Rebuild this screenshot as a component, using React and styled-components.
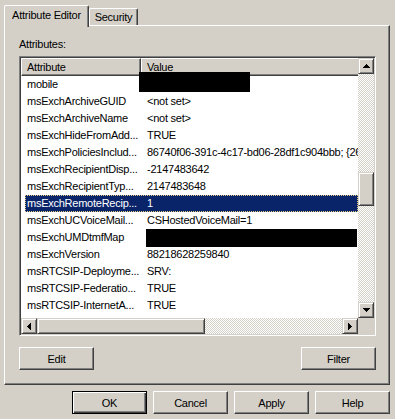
import React from "react";
import styled, { createGlobalStyle } from "styled-components";

const GlobalStyle = createGlobalStyle`
  html, body {
    margin: 0;
    padding: 0;
    background: #d4d0c8;
  }
  body {
    font-family: "Liberation Sans", Arial, sans-serif;
    font-size: 11px;
    letter-spacing: -0.25px;
    color: #000;
  }
`;

const rows = [
  ["mobile", ""],
  ["msExchArchiveGUID", "<not set>"],
  ["msExchArchiveName", "<not set>"],
  ["msExchHideFromAdd...", "TRUE"],
  ["msExchPoliciesInclud...", "86740f06-391c-4c17-bd06-28df1c904bbb; {26491cfc-9e50-4857-861b-0cb8df22b5d7}"],
  ["msExchRecipientDisp...", "-2147483642"],
  ["msExchRecipientTyp...", "2147483648"],
  ["msExchRemoteRecip...", "1"],
  ["msExchUCVoiceMail...", "CSHostedVoiceMail=1"],
  ["msExchUMDtmfMap", ""],
  ["msExchVersion", "88218628259840"],
  ["msRTCSIP-Deployme...", "SRV:"],
  ["msRTCSIP-Federatio...", "TRUE"],
  ["msRTCSIP-InternetA...", "TRUE"],
  ["msRTCSIP-OptionFla...", "257"],
];

const Arrow = ({ dir }) => {
  const up = [
    [3, 0, 1, 1],
    [2, 1, 3, 1],
    [1, 2, 5, 1],
    [0, 3, 7, 1],
  ];
  const vertical = dir === "up" || dir === "down";
  const rects = up.map(([x, y, w, h]) => {
    if (dir === "up") return [x, y, w, h];
    if (dir === "down") return [x, 3 - y, w, h];
    if (dir === "left") return [y, x, h, w];
    return [3 - y, x, h, w];
  });
  return (
    <svg
      width={vertical ? 7 : 4}
      height={vertical ? 4 : 7}
      shapeRendering="crispEdges"
    >
      {rects.map(([x, y, w, h], i) => (
        <rect key={i} x={x} y={y} width={w} height={h} fill="#000" />
      ))}
    </svg>
  );
};

const App = () => {
  return (
    <>
      <GlobalStyle />
      <Dialog>
        <TabStrip>
          <Tab $active $w={85}>Attribute Editor</Tab>
          <Tab $w={49}>Security</Tab>
        </TabStrip>
        <Panel>
          <Label>Attributes:</Label>
          <ListBox>
            <Content>
              <Header>
                <HeaderCell $w={120}>Attribute</HeaderCell>
                <HeaderCell $w={400}>Value</HeaderCell>
              </Header>
              <Rows>
                {rows.map(([name, value], i) => (
                  <Row key={name} $selected={i === 7}>
                    <AttrCell>{name}</AttrCell>
                    <ValueCell>{value}</ValueCell>
                  </Row>
                ))}
              </Rows>
            </Content>
            <VScroll>
              <ScrollBtn>
                <Arrow dir="up" />
              </ScrollBtn>
              <Track $size={98} />
              <Thumb $size={34} />
              <Track $fill />
              <ScrollBtn>
                <Arrow dir="down" />
              </ScrollBtn>
            </VScroll>
            <HScroll>
              <ScrollBtn>
                <Arrow dir="left" />
              </ScrollBtn>
              <Thumb $size={168} />
              <Track $fill />
              <ScrollBtn>
                <Arrow dir="right" />
              </ScrollBtn>
            </HScroll>
            <Corner />
            <Redaction $x={119} $y={15} $w={111} $h={20} />
            <Redaction $x={126} $y={172} $w={211} $h={18} />
          </ListBox>
          <ButtonRow>
            <PushButton>Edit</PushButton>
            <PushButton>Filter</PushButton>
          </ButtonRow>
        </Panel>
        <Footer>
          <PushButton $default>OK</PushButton>
          <PushButton>Cancel</PushButton>
          <PushButton>Apply</PushButton>
          <PushButton>Help</PushButton>
        </Footer>
      </Dialog>
    </>
  );
};

const Dialog = styled.div`
  width: 395px;
  height: 419px;
  box-sizing: border-box;
  padding: 5px 5px 0 4px;
  display: flex;
  flex-direction: column;
`;

const TabStrip = styled.div`
  display: flex;
  align-items: flex-end;
  height: 22px;
  margin-bottom: -2px;
  position: relative;
  z-index: 1;
`;

const Tab = styled.div`
  box-sizing: border-box;
  width: ${(p) => p.$w}px;
  height: ${(p) => (p.$active ? 22 : 17)}px;
  margin-bottom: ${(p) => (p.$active ? 0 : 2)}px;
  padding-top: ${(p) => (p.$active ? 3 : 2)}px;
  text-align: center;
  line-height: 13px;
  background: #d4d0c8;
  border-top: 1px solid #fff;
  border-left: 1px solid #fff;
  border-right: 1px solid #404040;
  box-shadow: inset -1px 0 #808080;
  border-radius: 2px 2px 0 0;
  white-space: nowrap;
`;

const Panel = styled.div`
  box-sizing: border-box;
  width: 386px;
  height: 360px;
  padding: 12px 13px 0 14px;
  border: 1px solid;
  border-color: #fff #404040 #404040 #fff;
  box-shadow: inset -1px -1px #808080;
  display: flex;
  flex-direction: column;
`;

const Label = styled.div`
  line-height: 13px;
  margin-bottom: 5px;
`;

const ListBox = styled.div`
  position: relative;
  box-sizing: border-box;
  width: 357px;
  height: 280px;
  padding: 1px;
  border: 1px solid;
  border-color: #808080 #fff #fff #808080;
  box-shadow: inset 1px 1px #404040, inset -1px -1px #d4d0c8;
  display: grid;
  grid-template-columns: 1fr 16px;
  grid-template-rows: 1fr 16px;
  background: #fff;
`;

const Content = styled.div`
  min-width: 0;
  overflow: hidden;
  display: flex;
  flex-direction: column;
`;

const Header = styled.div`
  display: flex;
  flex-shrink: 0;
`;

const HeaderCell = styled.div`
  box-sizing: border-box;
  flex-shrink: 0;
  width: ${(p) => p.$w}px;
  height: 18px;
  line-height: 16px;
  padding-left: 5px;
  background: #d4d0c8;
  border: 1px solid;
  border-color: #fff #404040 #404040 #fff;
  box-shadow: inset -1px -1px #808080;
  white-space: nowrap;
`;

const Rows = styled.div`
  overflow: hidden;
`;

const Row = styled.div`
  display: flex;
  height: 17px;
  line-height: 16px;
  margin-left: 4px;
  white-space: nowrap;
  background: ${(p) => (p.$selected ? "#0a246a" : "transparent")};
  color: ${(p) => (p.$selected ? "#fff" : "#000")};
  outline: ${(p) => (p.$selected ? "1px dotted #e8d080" : "none")};
  outline-offset: -1px;
`;

const AttrCell = styled.div`
  flex-shrink: 0;
  width: 116px;
  box-sizing: border-box;
  padding-left: 2px;
  overflow: hidden;
`;

const ValueCell = styled.div`
  padding-left: 6px;
`;

const checker = `
  background-color: #fff;
  background-image: repeating-conic-gradient(#d4d0c8 0 25%, #fff 0 50%);
  background-size: 2px 2px;
`;

const VScroll = styled.div`
  display: flex;
  flex-direction: column;
  ${checker}
`;

const HScroll = styled.div`
  display: flex;
  ${checker}
`;

const Raised = `
  box-sizing: border-box;
  background: #d4d0c8;
  border: 1px solid;
  border-color: #d4d0c8 #404040 #404040 #d4d0c8;
  box-shadow: inset 1px 1px #fff, inset -1px -1px #808080;
`;

const ScrollBtn = styled.div`
  ${Raised}
  flex-shrink: 0;
  width: 16px;
  height: 16px;
  display: flex;
  align-items: center;
  justify-content: center;
`;

const Thumb = styled.div`
  ${Raised}
  flex: 0 0 ${(p) => p.$size}px;
`;

const Track = styled.div`
  flex: ${(p) => (p.$fill ? "1 1 auto" : `0 0 ${p.$size}px`)};
`;

const Corner = styled.div`
  background: #d4d0c8;
`;

const Redaction = styled.div`
  position: absolute;
  left: ${(p) => p.$x}px;
  top: ${(p) => p.$y}px;
  width: ${(p) => p.$w}px;
  height: ${(p) => p.$h}px;
  background: #000;
`;

const ButtonRow = styled.div`
  display: flex;
  justify-content: space-between;
  margin-top: 11px;
`;

const PushButton = styled.button`
  box-sizing: border-box;
  width: 75px;
  height: 23px;
  padding: 0;
  font: inherit;
  letter-spacing: inherit;
  color: #000;
  background: #d4d0c8;
  border: 1px solid;
  border-color: ${(p) =>
    p.$default ? "#000" : "#fff #404040 #404040 #fff"};
  box-shadow: ${(p) =>
    p.$default
      ? "inset 1px 1px #fff, inset -1px -1px #404040, inset -2px -2px #808080"
      : "inset -1px -1px #808080"};
`;

const Footer = styled.div`
  display: flex;
  justify-content: flex-end;
  gap: 6px;
  margin-top: 6px;
`;

export default App;
